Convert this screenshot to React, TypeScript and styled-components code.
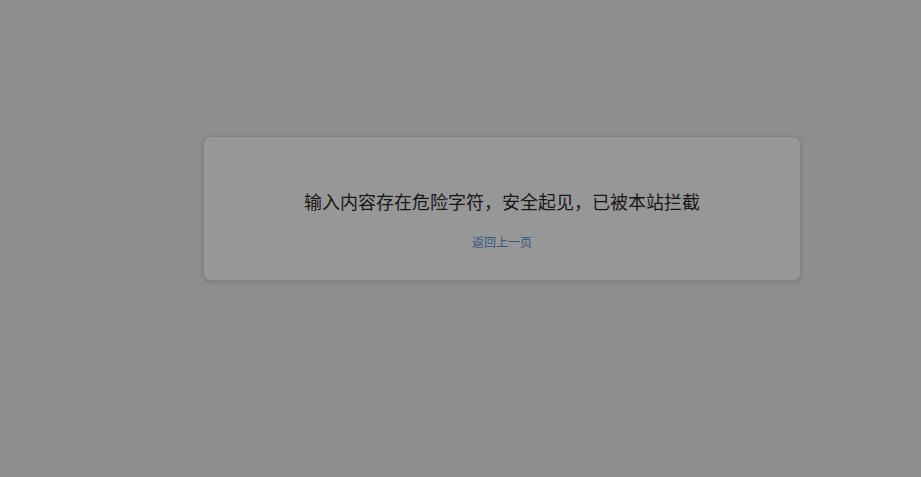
import { createGlobalStyle } from "styled-components";
import styled from "styled-components";

const GlobalStyle = createGlobalStyle`
  html, body {
    margin: 0;
    padding: 0;
    background: #8e8e8e;
  }
  body {
    font-family: "Noto Sans CJK SC", "Liberation Sans", sans-serif;
  }
`;

const Page = styled.div`
  min-height: 477px;
  background: #8e8e8e;
  padding: 136px 0 0 203px;
  box-sizing: border-box;
`;

const Card = styled.div`
  width: 598px;
  height: 145px;
  box-sizing: border-box;
  background: #979797;
  border: 1px solid #858585;
  border-radius: 8px;
  box-shadow: 0 1px 4px rgba(0, 0, 0, 0.15);
  display: flex;
  flex-direction: column;
  align-items: center;
  padding-top: 52px;
`;

const Message = styled.h2`
  margin: 0;
  font-size: 18px;
  line-height: 24px;
  font-weight: 400;
  color: #181818;
`;

const BackLink = styled.a`
  margin-top: 21px;
  font-size: 12px;
  line-height: 16px;
  color: #34567f;
  text-decoration: none;
  cursor: pointer;
`;

export default function App() {
  return (
    <>
      <GlobalStyle />
      <Page>
        <Card>
          <Message>输入内容存在危险字符，安全起见，已被本站拦截</Message>
          <BackLink onClick={() => window.history.back()}>返回上一页</BackLink>
        </Card>
      </Page>
    </>
  );
}
